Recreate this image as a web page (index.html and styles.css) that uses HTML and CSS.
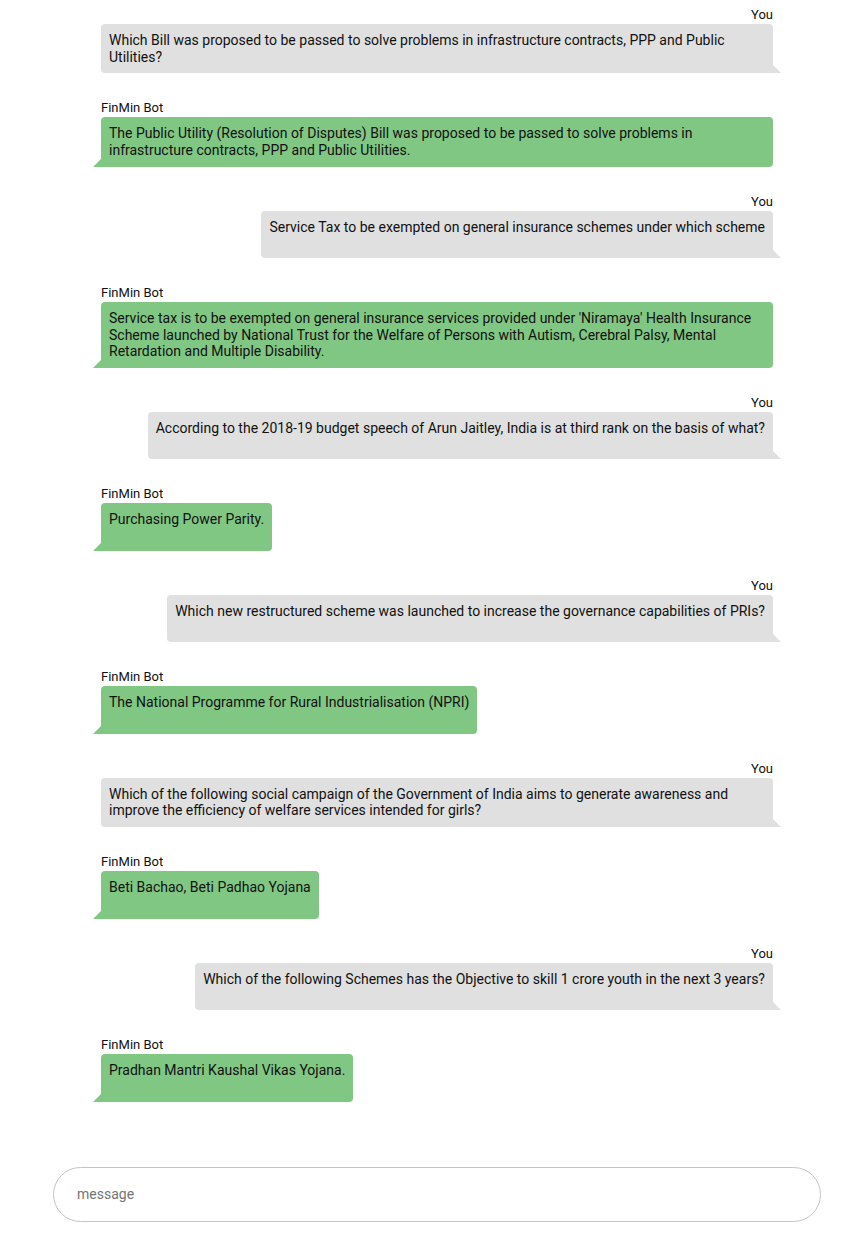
FILE: index.html
```html
<!DOCTYPE html>
<html lang="en">
<head>
<meta charset="utf-8">
<title>FinMin Bot</title>
<link rel="stylesheet" href="styles.css">
</head>
<body>
<div class="page">
  <div class="chat">
    <div class="msg user">
      <div class="who">You</div>
      <div class="bubble">Which Bill was proposed to be passed to solve problems in infrastructure contracts, PPP and Public Utilities?</div>
    </div>
    <div class="msg bot">
      <div class="who">FinMin Bot</div>
      <div class="bubble">The Public Utility (Resolution of Disputes) Bill was proposed to be passed to solve problems in infrastructure contracts, PPP and Public Utilities.</div>
    </div>
    <div class="msg user">
      <div class="who">You</div>
      <div class="bubble">Service Tax to be exempted on general insurance schemes under which scheme</div>
    </div>
    <div class="msg bot">
      <div class="who">FinMin Bot</div>
      <div class="bubble">Service tax is to be exempted on general insurance services provided under 'Niramaya' Health Insurance Scheme launched by National Trust for the Welfare of Persons with Autism, Cerebral Palsy, Mental Retardation and Multiple Disability.</div>
    </div>
    <div class="msg user">
      <div class="who">You</div>
      <div class="bubble">According to the 2018-19 budget speech of Arun Jaitley, India is at third rank on the basis of what?</div>
    </div>
    <div class="msg bot">
      <div class="who">FinMin Bot</div>
      <div class="bubble">Purchasing Power Parity.</div>
    </div>
    <div class="msg user">
      <div class="who">You</div>
      <div class="bubble">Which new restructured scheme was launched to increase the governance capabilities of PRIs?</div>
    </div>
    <div class="msg bot">
      <div class="who">FinMin Bot</div>
      <div class="bubble">The National Programme for Rural Industrialisation (NPRI)</div>
    </div>
    <div class="msg user">
      <div class="who">You</div>
      <div class="bubble">Which of the following social campaign of the Government of India aims to generate awareness and improve the efficiency of welfare services intended for girls?</div>
    </div>
    <div class="msg bot">
      <div class="who">FinMin Bot</div>
      <div class="bubble">Beti Bachao, Beti Padhao Yojana</div>
    </div>
    <div class="msg user">
      <div class="who">You</div>
      <div class="bubble">Which of the following Schemes has the Objective to skill 1 crore youth in the next 3 years?</div>
    </div>
    <div class="msg bot">
      <div class="who">FinMin Bot</div>
      <div class="bubble">Pradhan Mantri Kaushal Vikas Yojana.</div>
    </div>
  </div>
  <div class="composer">
    <input class="input" type="text" placeholder="message">
  </div>
</div>
</body>
</html>
```
FILE: styles.css
```css
html, body {
  margin: 0;
  padding: 0;
  background: #fff;
}
body {
  font-family: Roboto, "Liberation Sans", sans-serif;
  color: #111;
}
.page {
  display: flex;
  flex-direction: column;
  padding-top: 7px;
}
.chat {
  display: flex;
  flex-direction: column;
  gap: 27px;
  width: 672px;
  margin-left: 101px;
}
.msg {
  display: flex;
  flex-direction: column;
}
.msg.user { align-items: flex-end; }
.msg.bot { align-items: flex-start; }
.who {
  font-size: 13px;
  line-height: 15px;
  margin-bottom: 2px;
  color: #111;
}
.bubble {
  position: relative;
  box-sizing: border-box;
  min-height: 47.5px;
  max-width: 672px;
  padding: 8px 8px 8.25px;
  font-size: 14px;
  line-height: 16.5px;
  border-radius: 4px;
}
.user .bubble {
  background: #e0e0e0;
  border-bottom-right-radius: 0;
}
.bot .bubble {
  background: #81c784;
  border-bottom-left-radius: 0;
}
.bubble::after {
  content: "";
  position: absolute;
  bottom: 0;
  width: 0;
  height: 0;
  border-style: solid;
}
.user .bubble::after {
  right: -8px;
  border-width: 8px 0 0 8px;
  border-color: transparent transparent transparent #e0e0e0;
}
.bot .bubble::after {
  left: -8px;
  border-width: 8px 8px 0 0;
  border-color: transparent #81c784 transparent transparent;
}
.composer {
  margin-top: 65px;
  margin-left: 53px;
  width: 768px;
}
.input {
  box-sizing: border-box;
  width: 100%;
  height: 55px;
  border: 1px solid #c4c4c4;
  border-radius: 28px;
  padding: 0 23px;
  font-family: Roboto, "Liberation Sans", sans-serif;
  font-size: 14px;
  color: #111;
  outline: none;
  background: #fff;
}
.input::placeholder {
  color: #757575;
}
```
